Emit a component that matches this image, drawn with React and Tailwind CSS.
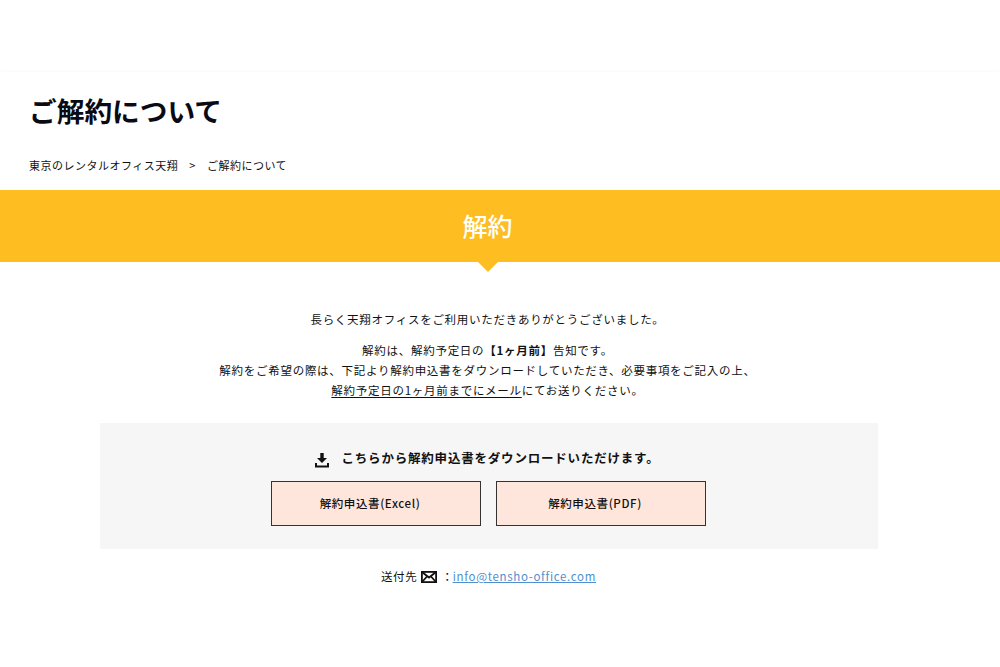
import React from 'react';

const App = () => {
  return (
    <div className="min-h-[667px] bg-white text-[#111] font-['Noto_Sans_CJK_JP','Noto_Sans',sans-serif]">
      {/* Header */}
      <div className="h-[70px] bg-white shadow-[0_1px_4px_rgba(0,0,0,0.03)]"></div>

      {/* Page title */}
      <div className="px-[30px]">
        <h1 className="mt-[22px] -ml-[1px] h-[36px] text-[27.7px] leading-[36px] font-bold text-[#0a0a14]">ご解約について</h1>
        <div className="mt-[28px] flex h-[18px] items-center text-[11px] leading-[18px] tracking-[0.5px] text-[#111] -ml-px">
          <span>東京のレンタルオフィス天翔</span>
          <span className="mx-[11px]">&gt;</span>
          <span>ご解約について</span>
        </div>
      </div>

      {/* Section band */}
      <div className="relative mt-[16px] flex h-[72px] items-center justify-center bg-[#febd21]">
        <h2 className="mb-[2px] text-[25px] leading-none font-medium text-white -ml-[25px]">解約</h2>
        <div className="absolute left-[478px] top-full h-0 w-0 border-x-[10px] border-t-[10px] border-x-transparent border-t-[#febd21]"></div>
      </div>

      {/* Body */}
      <div className="mt-[47px] text-center text-[11.5px] leading-[20px] tracking-[0.72px] text-[#111] -ml-[25px]">
        <p>長らく天翔オフィスをご利用いただきありがとうございました。</p>
        <p className="mt-[11px]">
          解約は、解約予定日の<b className="font-bold">【1ヶ月前】</b>告知です。
          <br />
          解約をご希望の際は、下記より解約申込書をダウンロードしていただき、必要事項をご記入の上、
          <br />
          <span className="underline underline-offset-2">解約予定日の1ヶ月前までにメール</span>にてお送りください。
        </p>
      </div>

      {/* Download box */}
      <div className="mx-[100px] mt-[23px] w-[778px] h-[126px] bg-[#f6f6f6] pt-[25px]">
        <div className="flex h-[20px] items-center justify-center gap-[12px] pr-[5px] text-[12.5px] font-bold tracking-[0.8px] text-[#111]">
          <svg width="16" height="16" viewBox="0 0 16 16" className="mt-[3px]" fill="#111">
            <path d="M6.3 1h3.4v5H13L8 11 3 6h3.3z" />
            <path d="M1 11h2v2.6h10V11h2v4.6H1z" />
          </svg>
          <span>こちらから解約申込書をダウンロードいただけます。</span>
        </div>
        <div className="mt-[13px] flex justify-center gap-[15px] pr-[1px]">
          <a className="flex h-[45px] w-[210px] items-center justify-center border border-[#333] bg-[#ffe6dc] pr-[12px] text-[11.5px] font-medium tracking-[0.6px] text-[#111]">解約申込書(Excel)</a>
          <a className="flex h-[45px] w-[210px] items-center justify-center border border-[#333] bg-[#ffe6dc] pr-[12px] text-[11.5px] font-medium tracking-[0.6px] text-[#111]">解約申込書(PDF)</a>
        </div>
      </div>

      {/* Contact */}
      <div className="mt-[18px] flex h-[20px] items-center justify-center text-[11.5px] tracking-[0.68px] text-[#111] -ml-[23px]">
        <span>送付先</span>
        <svg width="16" height="12" viewBox="0 0 16 12" className="ml-[4px]">
          <rect x="0.9" y="0.9" width="14.2" height="10.2" fill="#fff" stroke="#111" strokeWidth="1.8" />
          <path d="M1 1l7 5.5L15 1M1 11l5-5.5M15 11l-5-5.5" fill="none" stroke="#111" strokeWidth="1.8" />
        </svg>
        <span className="ml-[4px]">：</span>
        <a className="text-[#4f8fd0] underline -ml-[1px]">info@tensho-office.com</a>
      </div>
    </div>
  );
};

export default App;
